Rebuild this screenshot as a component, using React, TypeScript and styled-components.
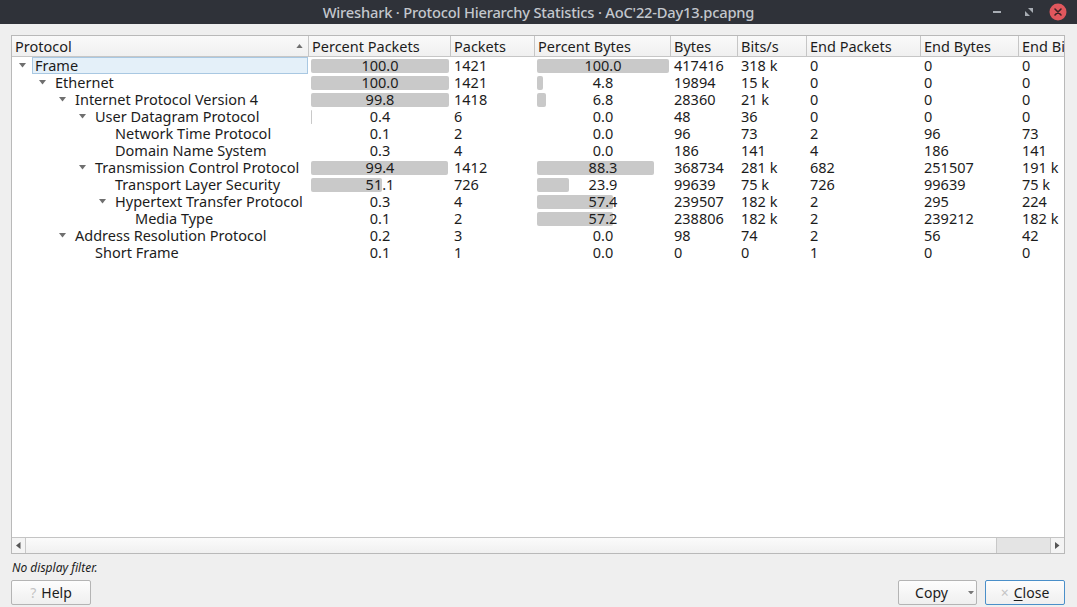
import React from 'react';
import styled, { createGlobalStyle } from 'styled-components';

const GlobalStyle = createGlobalStyle`
  html, body {
    margin: 0;
    padding: 0;
    background: #efefef;
  }
  * {
    box-sizing: border-box;
  }
`;

type RowData = {
  name: string;
  level: number;
  expanded: boolean;
  percentPackets: number;
  packets: number;
  percentBytes: number;
  bytes: number;
  bits: string;
  endPackets: number;
  endBytes: number;
  endBits: string;
};

const rows: RowData[] = [
  { name: 'Frame', level: 0, expanded: true, percentPackets: 100.0, packets: 1421, percentBytes: 100.0, bytes: 417416, bits: '318 k', endPackets: 0, endBytes: 0, endBits: '0' },
  { name: 'Ethernet', level: 1, expanded: true, percentPackets: 100.0, packets: 1421, percentBytes: 4.8, bytes: 19894, bits: '15 k', endPackets: 0, endBytes: 0, endBits: '0' },
  { name: 'Internet Protocol Version 4', level: 2, expanded: true, percentPackets: 99.8, packets: 1418, percentBytes: 6.8, bytes: 28360, bits: '21 k', endPackets: 0, endBytes: 0, endBits: '0' },
  { name: 'User Datagram Protocol', level: 3, expanded: true, percentPackets: 0.4, packets: 6, percentBytes: 0.0, bytes: 48, bits: '36', endPackets: 0, endBytes: 0, endBits: '0' },
  { name: 'Network Time Protocol', level: 4, expanded: false, percentPackets: 0.1, packets: 2, percentBytes: 0.0, bytes: 96, bits: '73', endPackets: 2, endBytes: 96, endBits: '73' },
  { name: 'Domain Name System', level: 4, expanded: false, percentPackets: 0.3, packets: 4, percentBytes: 0.0, bytes: 186, bits: '141', endPackets: 4, endBytes: 186, endBits: '141' },
  { name: 'Transmission Control Protocol', level: 3, expanded: true, percentPackets: 99.4, packets: 1412, percentBytes: 88.3, bytes: 368734, bits: '281 k', endPackets: 682, endBytes: 251507, endBits: '191 k' },
  { name: 'Transport Layer Security', level: 4, expanded: false, percentPackets: 51.1, packets: 726, percentBytes: 23.9, bytes: 99639, bits: '75 k', endPackets: 726, endBytes: 99639, endBits: '75 k' },
  { name: 'Hypertext Transfer Protocol', level: 4, expanded: true, percentPackets: 0.3, packets: 4, percentBytes: 57.4, bytes: 239507, bits: '182 k', endPackets: 2, endBytes: 295, endBits: '224' },
  { name: 'Media Type', level: 5, expanded: false, percentPackets: 0.1, packets: 2, percentBytes: 57.2, bytes: 238806, bits: '182 k', endPackets: 2, endBytes: 239212, endBits: '182 k' },
  { name: 'Address Resolution Protocol', level: 2, expanded: true, percentPackets: 0.2, packets: 3, percentBytes: 0.0, bytes: 98, bits: '74', endPackets: 2, endBytes: 56, endBits: '42' },
  { name: 'Short Frame', level: 3, expanded: false, percentPackets: 0.1, packets: 1, percentBytes: 0.0, bytes: 0, bits: '0', endPackets: 1, endBytes: 0, endBits: '0' },
];

// column widths in px, matching the Qt tree view
const COLS = [297, 142, 84, 136, 67, 69, 114, 98, 80];
const GRID = COLS.map((w) => `${w}px`).join(' ');
const PP_BAR = COLS[1] - 4;
const PB_BAR = COLS[3] - 4;

const UI_FONT = `"Noto Sans", "Open Sans", sans-serif`;
const TABLE_SIZE = '14.5px';

const Window = styled.div`
  width: 1077px;
  height: 607px;
  display: flex;
  flex-direction: column;
  background: #efefef;
  font-family: ${UI_FONT};
  color: #1c1c1c;
  overflow: hidden;
`;

const TitleBar = styled.div`
  height: 24px;
  flex: none;
  background: #2f3239;
  display: flex;
  align-items: center;
  justify-content: center;
  position: relative;
`;

const Title = styled.div`
  color: #c3c7cd;
  font-size: 14.7px;
  font-weight: 500;
  letter-spacing: -0.2px;
`;

const Controls = styled.div`
  position: absolute;
  right: 10px;
  top: 0;
  height: 24px;
  display: flex;
  align-items: center;
  gap: 16px;
`;

const Body = styled.div`
  flex: 1;
  display: flex;
  flex-direction: column;
  padding: 11px 12px 2px 11px;
  min-height: 0;
`;

const TreeBox = styled.div`
  height: 519px;
  flex: none;
  border: 1px solid #b9b9b9;
  background: #ffffff;
  display: flex;
  flex-direction: column;
  overflow: hidden;
`;

const Viewport = styled.div`
  flex: 1;
  overflow: hidden;
  min-height: 0;
`;

const HeaderRow = styled.div`
  display: grid;
  grid-template-columns: ${GRID};
  height: 21px;
  background: linear-gradient(#fafafa, #f0f0f0);
  border-bottom: 1px solid #c6c6c6;
`;

const HeaderCell = styled.div`
  display: flex;
  align-items: center;
  justify-content: space-between;
  padding: 0 5px 0 3px;
  font-size: ${TABLE_SIZE};
  border-right: 1px solid #c6c6c6;
  white-space: nowrap;
`;

const Row = styled.div`
  display: grid;
  grid-template-columns: ${GRID};
  height: 17px;
  font-size: ${TABLE_SIZE};
  line-height: 17px;
`;

const Cell = styled.div`
  padding-left: 3px;
  white-space: nowrap;
`;

const ProtocolCell = styled.div<{ $level: number }>`
  display: flex;
  padding-left: ${(p) => p.$level * 20}px;
  white-space: nowrap;
`;

const Branch = styled.div`
  width: 20px;
  flex: none;
  display: flex;
  align-items: center;
  justify-content: center;
`;

const Label = styled.div<{ $selected?: boolean }>`
  flex: 1;
  padding-left: 2px;
  margin-right: 1px;
  border: 1px solid ${(p) => (p.$selected ? '#a9c8e2' : 'transparent')};
  background: ${(p) => (p.$selected ? '#e4f0f9' : 'transparent')};
  line-height: 15px;
`;

const PercentCell = styled.div`
  display: grid;
  align-items: center;
`;

const Bar = styled.div`
  grid-area: 1 / 1;
  height: 14px;
  margin-left: 2px;
  background: #c9c9c9;
  border-radius: 2px;
`;

const PercentText = styled.div`
  grid-area: 1 / 1;
  text-align: center;
  position: relative;
`;

const HScroll = styled.div`
  height: 16px;
  flex: none;
  display: flex;
  border-top: 1px solid #c4c4c4;
  background: #e4e4e4;
`;

const ScrollArrow = styled.div<{ $side: 'left' | 'right' }>`
  width: 14px;
  flex: none;
  display: flex;
  align-items: center;
  justify-content: center;
  background: #f4f4f4;
  border-${(p) => (p.$side === 'left' ? 'right' : 'left')}: 1px solid #c8c8c8;
`;

const ScrollHandle = styled.div`
  width: 971px;
  flex: none;
  background: linear-gradient(#fbfbfb, #f0f0f0);
  border-right: 1px solid #c8c8c8;
`;

const Status = styled.div`
  height: 26px;
  flex: none;
  display: flex;
  align-items: center;
  font-size: 12px;
  font-style: italic;
  padding-left: 1px;
  padding-top: 1px;
`;

const ButtonRow = styled.div`
  display: flex;
  align-items: center;
  gap: 8px;
`;

const Spacer = styled.div`
  flex: 1;
`;

const Button = styled.button<{ $width: number; $default?: boolean }>`
  width: ${(p) => p.$width}px;
  height: 25px;
  display: flex;
  align-items: center;
  justify-content: center;
  gap: 5px;
  font-family: ${UI_FONT};
  font-size: 14px;
  color: #1c1c1c;
  background: linear-gradient(#fdfdfd, #efefef);
  border: 1px solid ${(p) => (p.$default ? '#4a8fc9' : '#b4b4b4')};
  border-radius: 2px;
  padding: 0;
`;

const FadedGlyph = styled.span`
  color: #c4c4c4;
  font-size: 14px;
`;

const DropArrow = styled.span`
  display: flex;
  margin-left: 15px;
  margin-right: -14px;
`;

const Underlined = styled.span`
  text-decoration: underline;
  text-underline-offset: 2px;
`;

const Triangle: React.FC<{ dir: 'down' | 'up' | 'left' | 'right'; color?: string; size?: number }> = ({
  dir,
  color = '#6f6f6f',
  size = 7,
}) => {
  const h = Math.ceil(size / 2) + 0.5;
  const points =
    dir === 'down'
      ? `0,0 ${size},0 ${size / 2},${h}`
      : dir === 'up'
      ? `0,${h} ${size},${h} ${size / 2},0`
      : dir === 'left'
      ? `${h},0 ${h},${size} 0,${size / 2}`
      : `0,0 0,${size} ${h},${size / 2}`;
  const vw = dir === 'down' || dir === 'up' ? size : h;
  const vh = dir === 'down' || dir === 'up' ? h : size;
  return (
    <svg width={vw} height={vh} viewBox={`0 0 ${vw} ${vh}`}>
      <polygon points={points} fill={color} />
    </svg>
  );
};

const WindowControls: React.FC = () => (
  <Controls>
    <svg width="8" height="2" viewBox="0 0 8 2">
      <rect width="8" height="2" fill="#a8adb4" />
    </svg>
    <svg width="8" height="8" viewBox="0 0 8 8" style={{ marginLeft: 8 }}>
      <polygon points="3,0 8,0 8,5" fill="#a8adb4" />
      <polygon points="0,3 5,8 0,8" fill="#a8adb4" />
    </svg>
    <svg width="18" height="18" viewBox="0 0 18 18">
      <circle cx="9" cy="9" r="8.5" fill="#e0575d" />
      <path d="M6 6 L12 12 M12 6 L6 12" stroke="#3a2326" strokeWidth="1.6" strokeLinecap="round" />
    </svg>
  </Controls>
);

const Percent: React.FC<{ value: number; max: number }> = ({ value, max }) => {
  const width = Math.round((value / 100) * max);
  return (
    <PercentCell>
      {width > 0 && <Bar style={{ width }} />}
      <PercentText>{value.toFixed(1)}</PercentText>
    </PercentCell>
  );
};

const headers = [
  'Protocol',
  'Percent Packets',
  'Packets',
  'Percent Bytes',
  'Bytes',
  'Bits/s',
  'End Packets',
  'End Bytes',
  'End Bits/s',
];

const App: React.FC = () => {
  return (
    <>
      <GlobalStyle />
      <Window>
        <TitleBar>
          <Title>Wireshark · Protocol Hierarchy Statistics · AoC'22-Day13.pcapng</Title>
          <WindowControls />
        </TitleBar>
        <Body>
          <TreeBox>
            <Viewport>
              <HeaderRow>
                {headers.map((h, i) => (
                  <HeaderCell key={h}>
                    <span>{h}</span>
                    {i === 0 && <Triangle dir="up" />}
                  </HeaderCell>
                ))}
              </HeaderRow>
              {rows.map((r, index) => (
                <Row key={r.name}>
                  <ProtocolCell $level={r.level}>
                    <Branch>{r.expanded && <Triangle dir="down" />}</Branch>
                    <Label $selected={index === 0}>{r.name}</Label>
                  </ProtocolCell>
                  <Percent value={r.percentPackets} max={PP_BAR} />
                  <Cell>{r.packets}</Cell>
                  <Percent value={r.percentBytes} max={PB_BAR} />
                  <Cell>{r.bytes}</Cell>
                  <Cell>{r.bits}</Cell>
                  <Cell>{r.endPackets}</Cell>
                  <Cell>{r.endBytes}</Cell>
                  <Cell>{r.endBits}</Cell>
                </Row>
              ))}
            </Viewport>
            <HScroll>
              <ScrollArrow $side="left">
                <Triangle dir="left" color="#555" size={7} />
              </ScrollArrow>
              <ScrollHandle />
              <Spacer />
              <ScrollArrow $side="right">
                <Triangle dir="right" color="#555" size={7} />
              </ScrollArrow>
            </HScroll>
          </TreeBox>
          <Status>No display filter.</Status>
          <ButtonRow>
            <Button $width={80}>
              <FadedGlyph>?</FadedGlyph>
              Help
            </Button>
            <Spacer />
            <Button $width={79}>
              Copy
              <DropArrow>
                <Triangle dir="down" color="#777" size={6} />
              </DropArrow>
            </Button>
            <Button $width={80} $default>
              <FadedGlyph>×</FadedGlyph>
              <span>
                <Underlined>C</Underlined>lose
              </span>
            </Button>
          </ButtonRow>
        </Body>
      </Window>
    </>
  );
};

export default App;
